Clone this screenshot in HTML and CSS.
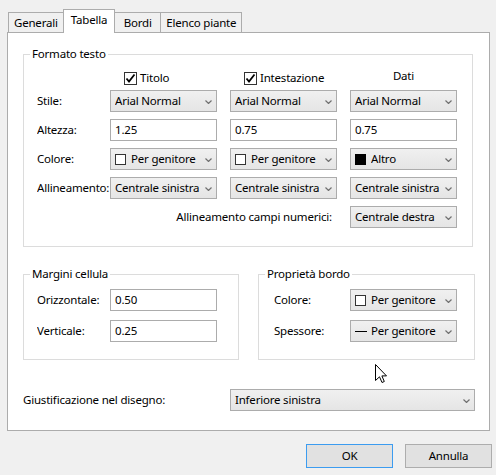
FILE: index.html
```html
<!DOCTYPE html>
<html lang="it">
<head>
<meta charset="utf-8">
<title>Tabella</title>
<link rel="stylesheet" href="styles.css">
</head>
<body>
<div class="dialog">
  <div class="tabs">
    <div class="tab">Generali</div>
    <div class="tab active">Tabella</div>
    <div class="tab">Bordi</div>
    <div class="tab">Elenco piante</div>
  </div>

  <div class="panel">
    <fieldset class="group group-format">
      <legend>Formato testo</legend>
      <div class="format-grid">
        <span class="blank"></span>
        <label class="check"><span class="box"><svg width="11" height="11" viewBox="0 0 11 11"><polyline points="1.5,5.5 4,8.5 9.5,1.5" fill="none" stroke="#000" stroke-width="1.8"/></svg></span>Titolo</label>
        <label class="check"><span class="box"><svg width="11" height="11" viewBox="0 0 11 11"><polyline points="1.5,5.5 4,8.5 9.5,1.5" fill="none" stroke="#000" stroke-width="1.8"/></svg></span>Intestazione</label>
        <span class="col-head">Dati</span>

        <span class="lbl">Stile:</span>
        <div class="combo"><span class="val">Arial Normal</span><svg class="chev" width="7" height="4" viewBox="0 0 7 4"><polyline points="0.5,0.5 3.5,3.5 6.5,0.5" fill="none" stroke="#707070" stroke-width="1.2"/></svg></div>
        <div class="combo"><span class="val">Arial Normal</span><svg class="chev" width="7" height="4" viewBox="0 0 7 4"><polyline points="0.5,0.5 3.5,3.5 6.5,0.5" fill="none" stroke="#707070" stroke-width="1.2"/></svg></div>
        <div class="combo"><span class="val">Arial Normal</span><svg class="chev" width="7" height="4" viewBox="0 0 7 4"><polyline points="0.5,0.5 3.5,3.5 6.5,0.5" fill="none" stroke="#707070" stroke-width="1.2"/></svg></div>

        <span class="lbl">Altezza:</span>
        <div class="field">1.25</div>
        <div class="field">0.75</div>
        <div class="field">0.75</div>

        <span class="lbl">Colore:</span>
        <div class="combo"><span class="swatch"></span><span class="val">Per genitore</span><svg class="chev" width="7" height="4" viewBox="0 0 7 4"><polyline points="0.5,0.5 3.5,3.5 6.5,0.5" fill="none" stroke="#707070" stroke-width="1.2"/></svg></div>
        <div class="combo"><span class="swatch"></span><span class="val">Per genitore</span><svg class="chev" width="7" height="4" viewBox="0 0 7 4"><polyline points="0.5,0.5 3.5,3.5 6.5,0.5" fill="none" stroke="#707070" stroke-width="1.2"/></svg></div>
        <div class="combo"><span class="swatch swatch-black"></span><span class="val">Altro</span><svg class="chev" width="7" height="4" viewBox="0 0 7 4"><polyline points="0.5,0.5 3.5,3.5 6.5,0.5" fill="none" stroke="#707070" stroke-width="1.2"/></svg></div>

        <span class="lbl">Allineamento:</span>
        <div class="combo"><span class="val">Centrale sinistra</span><svg class="chev" width="7" height="4" viewBox="0 0 7 4"><polyline points="0.5,0.5 3.5,3.5 6.5,0.5" fill="none" stroke="#707070" stroke-width="1.2"/></svg></div>
        <div class="combo"><span class="val">Centrale sinistra</span><svg class="chev" width="7" height="4" viewBox="0 0 7 4"><polyline points="0.5,0.5 3.5,3.5 6.5,0.5" fill="none" stroke="#707070" stroke-width="1.2"/></svg></div>
        <div class="combo"><span class="val">Centrale sinistra</span><svg class="chev" width="7" height="4" viewBox="0 0 7 4"><polyline points="0.5,0.5 3.5,3.5 6.5,0.5" fill="none" stroke="#707070" stroke-width="1.2"/></svg></div>

        <span class="lbl-wide">Allineamento campi numerici:</span>
        <div class="combo"><span class="val">Centrale destra</span><svg class="chev" width="7" height="4" viewBox="0 0 7 4"><polyline points="0.5,0.5 3.5,3.5 6.5,0.5" fill="none" stroke="#707070" stroke-width="1.2"/></svg></div>
      </div>
    </fieldset>

    <div class="lower">
      <fieldset class="group group-margins">
        <legend>Margini cellula</legend>
        <div class="pair-grid pair-margins">
          <span class="lbl">Orizzontale:</span>
          <div class="field">0.50</div>
          <span class="lbl">Verticale:</span>
          <div class="field">0.25</div>
        </div>
      </fieldset>
      <fieldset class="group group-border">
        <legend>Proprietà bordo</legend>
        <div class="pair-grid pair-border">
          <span class="lbl">Colore:</span>
          <div class="combo"><span class="swatch"></span><span class="val">Per genitore</span><svg class="chev" width="7" height="4" viewBox="0 0 7 4"><polyline points="0.5,0.5 3.5,3.5 6.5,0.5" fill="none" stroke="#707070" stroke-width="1.2"/></svg></div>
          <span class="lbl">Spessore:</span>
          <div class="combo"><span class="dash"></span><span class="val">Per genitore</span><svg class="chev" width="7" height="4" viewBox="0 0 7 4"><polyline points="0.5,0.5 3.5,3.5 6.5,0.5" fill="none" stroke="#707070" stroke-width="1.2"/></svg></div>
        </div>
      </fieldset>
    </div>

    <div class="just-row">
      <span class="just-lbl">Giustificazione nel disegno:</span>
      <div class="combo combo-wide"><span class="val">Inferiore sinistra</span><svg class="chev" width="7" height="4" viewBox="0 0 7 4"><polyline points="0.5,0.5 3.5,3.5 6.5,0.5" fill="none" stroke="#707070" stroke-width="1.2"/></svg></div>
    </div>
  </div>

  <div class="buttons">
    <div class="btn btn-default">OK</div>
    <div class="btn">Annulla</div>
  </div>
</div>

<svg class="cursor" width="13" height="20" viewBox="0 0 13 20"><path d="M0.5 0.5 V16.5 L4.5 12.8 L7 18.5 L9.3 17.5 L6.9 11.9 H11.5 Z" fill="#fff" stroke="#000" stroke-width="1" stroke-linejoin="miter"/></svg>
</body>
</html>
```

FILE: styles.css
```css
* {
  box-sizing: border-box;
}

html, body {
  margin: 0;
  padding: 0;
}

body {
  position: relative;
  width: 496px;
  height: 475px;
  background: #f0f0f0;
  font-family: "Noto Sans", "Liberation Sans", sans-serif;
  font-size: 11.5px;
  letter-spacing: -0.2px;
  line-height: 16px;
  color: #000;
  overflow: hidden;
}

.dialog {
  padding-top: 9px;
}

/* Tabs */
.tabs {
  display: flex;
  align-items: flex-end;
  padding-left: 8px;
  height: 23px;
}

.tab {
  height: 20px;
  min-width: 47px;
  padding: 0 5px;
  border: 1px solid #acacac;
  border-bottom: none;
  background: #f0f0f0;
  margin-left: -1px;
  display: flex;
  align-items: center;
  justify-content: center;
  padding-top: 1px;
}

.tab:first-child {
  margin-left: 0;
}

.tab.active {
  height: 24px;
  padding-left: 7px;
  padding-right: 7px;
  background: #fff;
  position: relative;
  z-index: 1;
  margin-bottom: -1px;
  padding-top: 0;
  padding-bottom: 3px;
}

/* Panel */
.panel {
  margin-left: 7px;
  width: 483px;
  height: 399px;
  border: 1px solid #acacac;
  background: #fff;
  padding: 13px 0 0 15px;
}

.group {
  margin: 0;
  padding: 0;
  border: 1px solid #dcdcdc;
  min-width: 0;
}

.group legend {
  margin-left: 6px;
  padding: 0 2px;
  line-height: 16px;
}

.group-format {
  width: 450px;
}

.format-grid {
  display: grid;
  grid-template-columns: 73px 120px 120px 107px;
  grid-auto-rows: 22px;
  grid-template-rows: 16px;
  row-gap: 7px;
  padding: 5px 0 18px 13px;
  align-items: center;
}

.check {
  display: flex;
  align-items: center;
  padding-left: 14px;
  align-self: end;
  margin-bottom: -3px;
}

.box {
  width: 13px;
  height: 13px;
  border: 1px solid #333;
  background: #fff;
  margin-right: 3px;
  display: flex;
}

.col-head {
  text-align: center;
  align-self: end;
  margin-bottom: -1px;
}

.lbl {
  white-space: nowrap;
  overflow: hidden;
  padding-right: 4px;
}

.lbl-wide {
  grid-column: 1 / 4;
  text-align: right;
  padding-right: 18px;
  white-space: nowrap;
}

.combo {
  width: 107px;
  height: 22px;
  border: 1px solid #acacac;
  background: linear-gradient(#f0f0f0, #e5e5e5);
  display: flex;
  align-items: center;
  padding: 0 4px 0 4px;
}

.combo .val {
  flex: 1;
  min-width: 0;
  overflow: hidden;
  white-space: nowrap;
}

.combo .chev {
  flex: none;
  margin-left: 1px;
  margin-top: 1px;
}

.combo-wide {
  width: 245px;
}

.field {
  width: 107px;
  height: 22px;
  border: 1px solid #acacac;
  background: #fff;
  padding: 0 4px;
  display: flex;
  align-items: center;
}

.swatch {
  flex: none;
  width: 11px;
  height: 11px;
  border: 1px solid #333;
  background: #fff;
  margin-right: 5px;
}

.swatch-black {
  background: #000;
  border-color: #000;
}

.dash {
  flex: none;
  width: 12px;
  height: 1px;
  background: #000;
  margin-right: 4px;
}

/* Lower groups */
.lower {
  display: flex;
  gap: 19px;
  margin-top: 19px;
}

.group-margins {
  width: 216px;
}

.group-border {
  width: 217px;
}

.pair-grid {
  display: grid;
  grid-auto-rows: 22px;
  row-gap: 9px;
  align-items: center;
  padding-top: 7px;
  padding-bottom: 17px;
}

.pair-margins {
  grid-template-columns: 73px 107px;
  padding-left: 13px;
}

.pair-border {
  grid-template-columns: 76px 107px;
  padding-left: 15px;
}

/* Justification row */
.just-row {
  display: flex;
  align-items: center;
  margin-top: 29px;
}

.just-lbl {
  width: 207px;
}

/* Buttons */
.buttons {
  display: flex;
  justify-content: flex-end;
  gap: 12px;
  margin-top: 13px;
  padding-right: 4px;
}

.btn {
  width: 87px;
  height: 24px;
  border: 1px solid #adadad;
  background: #e1e1e1;
  display: flex;
  align-items: center;
  justify-content: center;
}

.btn-default {
  border-color: #3c9cf0;
}

.cursor {
  position: absolute;
  left: 375px;
  top: 364px;
}
```
